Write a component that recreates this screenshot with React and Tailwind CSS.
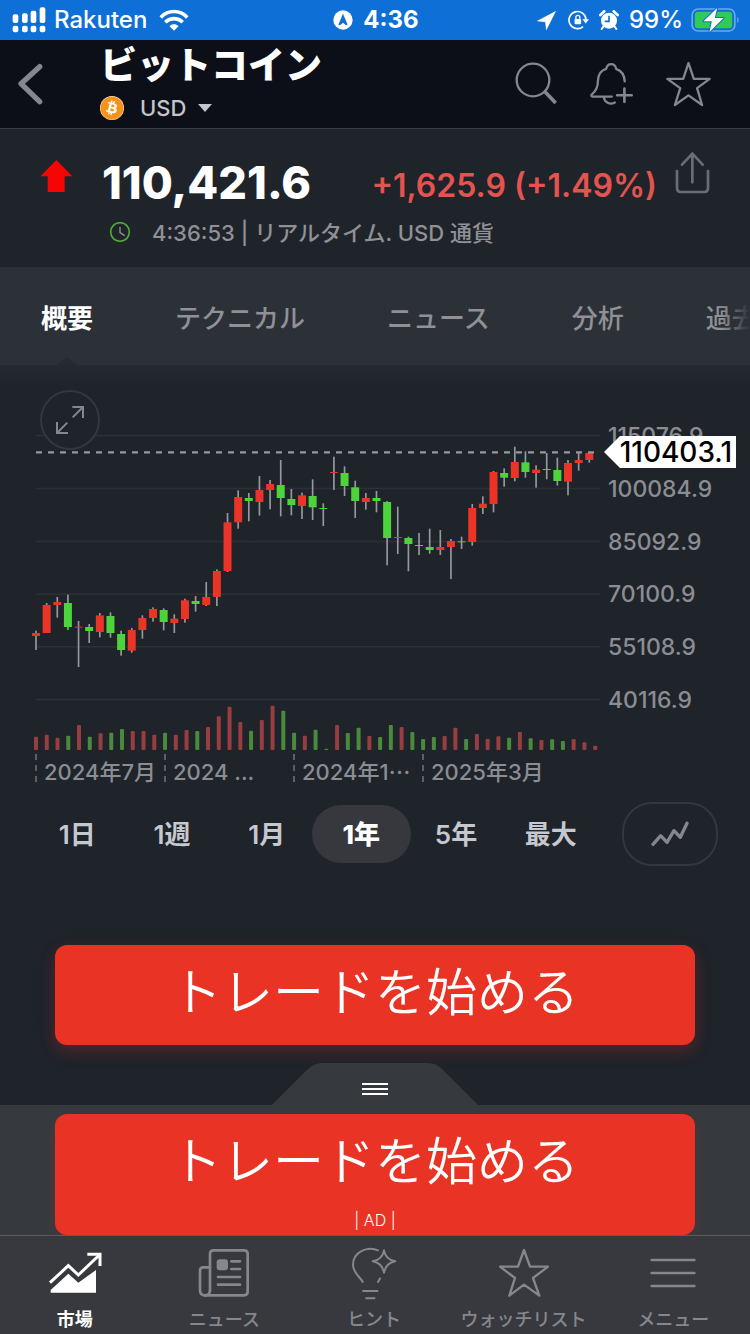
import React, { useState } from 'react'
import { FaBitcoin } from 'react-icons/fa'

// [wick top, wick bottom, body top, body bottom, direction]
const CANDLES = [
  [752, 810, 759, 768, 'up'],
  [669, 759, 675, 759, 'up'],
  [651, 713, 666, 675, 'up'],
  [644, 750, 669, 741, 'down'],
  [723, 861, 740, 743, 'up'],
  [732, 789, 741, 753, 'down'],
  [699, 772, 706, 756, 'up'],
  [697, 773, 708, 759, 'down'],
  [752, 827, 762, 810, 'down'],
  [744, 818, 750, 812, 'up'],
  [706, 776, 714, 750, 'up'],
  [682, 725, 687, 714, 'up'],
  [685, 751, 690, 726, 'down'],
  [703, 759, 716, 729, 'up'],
  [656, 728, 661, 717, 'up'],
  [648, 695, 663, 672, 'down'],
  [606, 678, 651, 675, 'up'],
  [568, 678, 573, 651, 'up'],
  [399, 576, 427, 573, 'up'],
  [331, 446, 351, 427, 'up'],
  [339, 424, 354, 363, 'down'],
  [288, 407, 330, 366, 'up'],
  [300, 388, 312, 330, 'up'],
  [240, 409, 315, 354, 'down'],
  [327, 406, 357, 375, 'down'],
  [338, 417, 346, 378, 'up'],
  [298, 420, 348, 382, 'down'],
  [370, 438, 384, 387, 'down'],
  [230, 330, 276, 279, 'up'],
  [259, 348, 279, 318, 'down'],
  [302, 414, 322, 363, 'down'],
  [339, 389, 354, 366, 'up'],
  [333, 397, 354, 363, 'down'],
  [363, 556, 366, 474, 'down'],
  [380, 522, 471, 474, 'up'],
  [470, 574, 474, 492, 'down'],
  [459, 525, 495, 498, 'down'],
  [446, 521, 501, 510, 'down'],
  [450, 525, 501, 510, 'up'],
  [477, 597, 483, 501, 'up'],
  [470, 507, 484, 487, 'down'],
  [372, 497, 384, 486, 'up'],
  [349, 402, 371, 384, 'up'],
  [273, 397, 276, 372, 'up'],
  [265, 320, 279, 293, 'down'],
  [200, 304, 246, 294, 'up'],
  [214, 293, 247, 276, 'down'],
  [256, 323, 269, 279, 'up'],
  [219, 298, 267, 270, 'down'],
  [233, 317, 270, 303, 'down'],
  [240, 346, 249, 305, 'up'],
  [219, 272, 240, 249, 'up'],
  [217, 248, 219, 240, 'up'],
]

const VOLUMES = [
  [40, 'up'], [46, 'up'], [37, 'up'], [43, 'down'], [75, 'up'], [40, 'down'],
  [50, 'up'], [52, 'down'], [63, 'down'], [57, 'up'], [57, 'up'], [46, 'up'],
  [52, 'down'], [46, 'up'], [60, 'up'], [57, 'down'], [69, 'up'], [101, 'up'],
  [130, 'up'], [84, 'up'], [58, 'down'], [90, 'up'], [133, 'up'], [118, 'down'],
  [52, 'down'], [43, 'up'], [61, 'down'], [4, 'down'], [75, 'up'], [51, 'down'],
  [67, 'down'], [42, 'up'], [39, 'down'], [75, 'down'], [69, 'up'], [54, 'down'],
  [33, 'down'], [39, 'down'], [42, 'up'], [67, 'up'], [33, 'down'], [48, 'up'],
  [34, 'up'], [41, 'up'], [37, 'down'], [54, 'up'], [35, 'down'], [30, 'up'],
  [32, 'down'], [27, 'down'], [33, 'up'], [23, 'up'], [13, 'up'],
]

const GRID = [167, 326, 485, 643, 801, 959]
const PRICES = ['115076.9', '100084.9', '85092.9', '70100.9', '55108.9', '40116.9']
const DATES = ['2024年7月', '2024 ...', '2024年1⋯', '2025年3月']
const TABS = ['概要', 'テクニカル', 'ニュース', '分析', '過去データ']
const PERIODS = ['1日', '1週', '1月', '1年', '5年', '最大']

function StatusBar() {
  return (
    <div className="h-10 bg-[#0e6fd6] text-white grid grid-cols-[1fr_auto_1fr] items-center pl-3 pr-[10px] text-2xl leading-none">
      <div className="flex items-center font-medium">
        <svg viewBox="0 0 102 78" className="w-[34px] h-[26px]" fill="currentColor">
          <rect x="2" y="22" width="17" height="26" rx="6" />
          <rect x="30" y="19" width="17" height="29" rx="6" />
          <rect x="56" y="11" width="17" height="37" rx="6" />
          <rect x="83" y="1" width="17" height="47" rx="6" />
          <rect x="2" y="56" width="17" height="20" rx="6" />
          <rect x="30" y="56" width="17" height="20" rx="6" />
          <rect x="56" y="56" width="17" height="20" rx="6" />
          <rect x="83" y="56" width="17" height="20" rx="6" />
        </svg>
        <span className="ml-2">Rakuten</span>
        <svg viewBox="0 0 90 68" className="ml-3 w-[30px] h-[22px]" fill="none" stroke="currentColor" strokeWidth="11">
          <path d="M4 26C27 2 63 2 86 26" />
          <path d="M18 41C34 26 56 26 72 41" />
          <path d="M31 53C39 45 51 45 59 53L45 67Z" fill="currentColor" stroke="none" />
        </svg>
      </div>
      <div className="flex items-center gap-[10px] font-bold">
        <svg viewBox="0 0 60 60" className="w-5 h-5">
          <circle cx="30" cy="30" r="29" fill="#fff" />
          <path d="M30 11L44 44L39 46L30 38L21 46L16 44Z" fill="#0e6fd6" />
        </svg>
        <span>4:36</span>
      </div>
      <div className="flex items-center justify-end">
        <svg viewBox="0 0 57 57" className="w-[19px] h-[19px]" fill="currentColor">
          <path d="M56 1L28 57L25 33L1 30Z" stroke="currentColor" strokeWidth="1" strokeLinejoin="round" />
        </svg>
        <svg viewBox="0 0 64 60" className="ml-3 w-[21px] h-5" fill="none" stroke="currentColor" strokeWidth="5">
          <path d="M46 50A26 26 0 1 1 55 29" />
          <path d="M44 28H64L54 41Z" fill="currentColor" stroke="none" />
          <rect x="20" y="27" width="20" height="16" rx="3" fill="currentColor" stroke="none" />
          <path d="M24 28V22A6 6 0 0 1 36 22V28" strokeWidth="4" />
        </svg>
        <svg viewBox="0 0 60 60" className="ml-[10px] w-5 h-5" fill="currentColor">
          <circle cx="30" cy="32" r="24" />
          <path d="M4 15L16 4M56 15L44 4" stroke="currentColor" strokeWidth="8" strokeLinecap="round" />
          <path d="M13 50L8 57M47 50L52 57" stroke="currentColor" strokeWidth="6" strokeLinecap="round" />
          <path d="M30 17V34H17" fill="none" stroke="#0e6fd6" strokeWidth="5" />
        </svg>
        <span className="ml-[10px] font-medium">99%</span>
        <svg viewBox="0 0 146 78" className="ml-2 w-[49px] h-[26px]">
          <rect x="3" y="6" width="128" height="66" rx="18" fill="none" stroke="#6ba8ea" strokeWidth="5" />
          <rect x="11" y="14" width="112" height="50" rx="10" fill="#32c955" />
          <path d="M138 30C144 33 144 45 138 48Z" fill="#6ba8ea" />
          <path d="M78 3L37 43H62L55 75L97 33H71Z" fill="#fff" stroke="#0e6fd6" strokeWidth="6" paintOrder="stroke" strokeLinejoin="round" />
        </svg>
      </div>
    </div>
  )
}

function Header() {
  return (
    <header className="h-[89px] bg-[#0c0f17] border-b border-[#3a3d42] flex items-center pl-4 pr-[39px] text-[#85878d]">
      <button aria-label="戻る" className="w-[30px]">
        <svg viewBox="0 0 90 126" className="w-[30px] h-[42px]" fill="none" stroke="currentColor" strokeWidth="16" strokeLinecap="round" strokeLinejoin="round">
          <path d="M71 11L15 62L71 116" />
        </svg>
      </button>
      <div className="ml-[54px] flex-1 self-stretch flex flex-col">
        <h1 className="text-[37px] leading-[52px] font-black text-white whitespace-nowrap">ビットコイン</h1>
        <button className="flex items-center h-8 text-[#c3c5ca]">
          <span className="w-6 h-6 rounded-full bg-white flex items-center justify-center">
            <FaBitcoin className="w-6 h-6 text-[#f7931a]" />
          </span>
          <span className="ml-4 text-[22px] font-medium">USD</span>
          <svg viewBox="0 0 14 8" className="ml-3 w-[14px] h-2" fill="currentColor">
            <path d="M0 0H14L7 8Z" />
          </svg>
        </button>
      </div>
      <div className="flex items-center gap-[33px]">
        <button aria-label="検索">
          <svg viewBox="0 0 126 132" className="w-[42px] h-11" fill="none" stroke="currentColor">
            <circle cx="54" cy="54" r="49" strokeWidth="7" />
            <path d="M90 89L122 123" strokeWidth="11" />
          </svg>
        </button>
        <button aria-label="アラート">
          <svg viewBox="0 0 130 132" className="w-[43px] h-11" fill="none" stroke="currentColor" strokeWidth="7" strokeLinecap="round" strokeLinejoin="round">
            <path d="M66 104H7C3 104 3 99 7 96C19 86 24 74 24 56C25 36 34 24 49 20C51 10 57 6 64 6C71 6 77 10 79 20C94 25 104 37 105 58" />
            <path d="M42 106C43 121 60 130 75 122" />
            <path d="M104 80V120M82 100H126" strokeWidth="8" />
          </svg>
        </button>
        <button aria-label="お気に入り">
          <svg viewBox="0 0 136 142" className="w-[45px] h-[47px]" fill="none" stroke="currentColor" strokeWidth="7" strokeLinejoin="round">
            <path d="M68 6L84 54H132L94 82L109 133L68 104L27 133L43 82L4 54H52Z" />
          </svg>
        </button>
      </div>
    </header>
  )
}

function Quote() {
  return (
    <section className="h-[138px] pl-[41px] pr-10 pt-[22px]">
      <div className="flex items-start">
        <svg viewBox="0 0 96 99" className="mt-[9px] w-8 h-[33px]" fill="#f60505">
          <path d="M46 0L94 49H71V96H20V49H-2Z" />
        </svg>
        <div className="ml-[29px] h-[62px] flex-1 flex items-center justify-between whitespace-nowrap">
          <span className="text-[45px] leading-none font-extrabold text-white">110,421.6</span>
          <span className="pt-2 text-[32px] leading-none font-semibold text-[#e4544e]">+1,625.9 (+1.49%)</span>
        </div>
        <button aria-label="共有" className="ml-[18px] text-[#696d74]">
          <svg viewBox="0 0 105 132" className="w-[35px] h-11" fill="none" stroke="currentColor" strokeWidth="8" strokeLinecap="round" strokeLinejoin="round">
            <path d="M52 94V8M21 41L52 8L83 41" />
            <path d="M6 60V112Q6 123 17 123H88Q99 123 99 112V60" />
          </svg>
        </button>
      </div>
      <div className="ml-[68px] mt-[6px] flex items-center text-[#8f9196]">
        <svg viewBox="0 0 66 66" className="w-[22px] h-[22px]" fill="none" strokeWidth="5">
          <circle cx="33" cy="30" r="28" stroke="#54a838" />
          <path d="M33 15V32L47 41" stroke="currentColor" strokeWidth="4" />
        </svg>
        <span className="ml-[21px] text-[22px] leading-7 font-medium whitespace-nowrap">4:36:53 | リアルタイム. USD 通貨</span>
      </div>
    </section>
  )
}

function Tabs({ active, onSelect }) {
  return (
    <nav className="relative h-[98px] bg-[#2c3037] overflow-hidden">
      <div className="h-full flex items-stretch gap-[82px] pl-[41px] text-[26px] font-medium whitespace-nowrap">
        {TABS.map((tab) => (
          <button
            key={tab}
            onClick={() => onSelect(tab)}
            className={
              'relative shrink-0 pt-1 ' + (tab === active ? 'text-white font-bold' : 'text-[#8f9196]')
            }
          >
            {tab}
            {tab === active && (
              <svg viewBox="0 0 20 8" className="absolute bottom-0 left-1/2 -translate-x-1/2 w-5 h-2" fill="#262a31">
                <path d="M0 8L10 0L20 8Z" />
              </svg>
            )}
          </button>
        ))}
      </div>
      <div className="absolute inset-y-0 right-0 w-7 bg-linear-to-r from-transparent to-[#2c3037]" />
    </nav>
  )
}

function CandleChart() {
  return (
    <svg viewBox="0 0 1812 1122" className="block w-full h-auto">
      {GRID.map((y) => (
        <rect key={y} x="108" y={y - 3} width="1692" height="5" fill="#2b2f36" />
      ))}
      {CANDLES.map(([wickTop, wickBottom, top, bottom, dir], i) => {
        const x = 108 + i * 31.92
        return (
          <g key={i}>
            <rect x={x - 2.5} y={wickTop} width="5" height={wickBottom - wickTop} fill="#96989c" />
            <rect x={x - 12} y={top} width="24" height={bottom - top} fill={dir === 'up' ? '#e93427' : '#4dd33c'} />
          </g>
        )
      })}
      <path d="M108 217H1784" stroke="#96989c" strokeWidth="7" strokeDasharray="18 18" />
      {VOLUMES.map(([height, dir], i) => (
        <rect
          key={i}
          x={102 + i * 32.26}
          y={1110 - height}
          width="12"
          height={height}
          rx="3"
          fill={dir === 'up' ? '#983e40' : '#4b8a3c'}
        />
      ))}
    </svg>
  )
}

function ChartPanel() {
  return (
    <section className="relative pt-[15px]">
      <div className="flex">
        <div className="flex-1">
          <CandleChart />
        </div>
        <div className="w-[146px] pl-1 pt-11 pb-[42px] flex flex-col justify-between text-[23px] leading-6 font-medium text-[#8b8d92]">
          {PRICES.map((price) => (
            <span key={price}>{price}</span>
          ))}
        </div>
      </div>
      <div className="ml-[35px] flex text-[22px] leading-7 font-medium text-[#8b8d92]">
        {DATES.map((date) => (
          <span key={date} className="w-[129px] h-7 pt-1 pl-[7px] border-l-2 border-dashed border-[#5c5f65] whitespace-nowrap">
            {date}
          </span>
        ))}
      </div>

      <button
        aria-label="全画面"
        className="absolute left-10 top-[25px] w-[60px] h-[60px] rounded-full border-2 border-[#33373e] bg-[#1f232a] text-[#85878d] flex items-center justify-center"
      >
        <svg viewBox="0 0 84 84" className="w-7 h-7" fill="none" stroke="currentColor" strokeWidth="6">
          <path d="M49 3H81V36M81 3L50 34" />
          <path d="M3 48V81H36M3 81L34 50" />
        </svg>
      </button>
      <div className="absolute right-[14px] top-[71px] flex">
        <svg viewBox="0 0 16 32" className="w-4 h-8" fill="#fff">
          <path d="M16 0V32L0 16Z" />
        </svg>
        <span className="h-8 pr-1 bg-white text-black text-[28px] leading-8 font-medium">110403.1</span>
      </div>
    </section>
  )
}

function PeriodBar({ active, onSelect }) {
  return (
    <div className="mt-5 pl-[30px] pr-8 flex items-center">
      <div className="flex-1 grid grid-cols-6 text-[26px] font-semibold text-[#c6c8cf]">
        {PERIODS.map((period) => (
          <button
            key={period}
            onClick={() => onSelect(period)}
            className={
              'h-[58px] rounded-full -mx-[2px] ' +
              (period === active ? 'bg-[#37383d] text-white font-extrabold' : '')
            }
          >
            {period}
          </button>
        ))}
      </div>
      <button
        aria-label="チャートの種類"
        className="ml-6 w-24 h-16 rounded-[30px] border-2 border-[#33373e] text-[#85878d] flex items-center justify-center"
      >
        <svg viewBox="0 0 114 78" className="w-[38px] h-[26px]" fill="none" stroke="currentColor" strokeWidth="10" strokeLinecap="round" strokeLinejoin="round">
          <path d="M6 70L29 44L48 64L69 29L88 49L108 7" />
        </svg>
      </button>
    </div>
  )
}

function TradeButton({ children, className }) {
  return (
    <button
      className={
        'block mx-[55px] rounded-xl bg-[#e93324] text-white text-[51px] leading-[96px] font-[350] whitespace-nowrap ' +
        className
      }
    >
      トレードを始める
      {children}
    </button>
  )
}

function MarketIcon() {
  return (
    <svg viewBox="0 0 162 126" className="w-[54px] h-[42px]" fill="none" stroke="currentColor" strokeWidth="9">
      <path d="M6 92L61 41L91 69L154 9" />
      <path d="M118 7H156V42" />
      <path d="M8 114L61 65L91 92L144 54V122H8Z" fill="currentColor" stroke="none" />
    </svg>
  )
}

function NewsIcon() {
  return (
    <svg viewBox="0 0 156 150" className="w-[52px] h-[50px]" fill="none" stroke="currentColor" strokeWidth="8" strokeLinecap="round">
      <path d="M36 128V18Q36 7 47 7H138Q149 7 149 18V130Q149 142 138 142H20" />
      <path d="M36 58H16Q6 58 6 68V127Q6 142 21 142T36 127" />
      <rect x="56" y="34" width="34" height="33" rx="9" fill="currentColor" stroke="none" />
      <path d="M100 40H126M100 63H126M60 87H126M60 110H126" />
    </svg>
  )
}

function HintIcon() {
  return (
    <svg viewBox="0 0 144 162" className="w-12 h-[54px]" fill="none" stroke="currentColor" strokeWidth="6">
      <path d="M39 110C34 94 9 84 9 56C9 20 50-2 86 14" />
      <path d="M91 95L83 110M37 135H85M46 157H76" />
      <path d="M102 13Q107 41 136 46Q107 51 102 80Q97 51 68 46Q97 41 102 13Z" strokeLinejoin="round" />
    </svg>
  )
}

function StarIcon() {
  return (
    <svg viewBox="0 0 150 150" className="w-[50px] h-[50px]" fill="none" stroke="currentColor" strokeWidth="7" strokeLinejoin="round">
      <path d="M75 6L93 56H147L102 90L121 143L75 110L31 143L48 90L3 56H57Z" />
    </svg>
  )
}

function MenuIcon() {
  return (
    <svg viewBox="0 0 138 90" className="w-[46px] h-[30px]" fill="none" stroke="currentColor" strokeWidth="8" strokeLinecap="round">
      <path d="M5 6H133M5 45H133M5 84H133" />
    </svg>
  )
}

const NAV = [
  { label: '市場', Icon: MarketIcon },
  { label: 'ニュース', Icon: NewsIcon },
  { label: 'ヒント', Icon: HintIcon },
  { label: 'ウォッチリスト', Icon: StarIcon },
  { label: 'メニュー', Icon: MenuIcon },
]

function BottomNav() {
  return (
    <nav className="h-[99px] pr-[2px] bg-[#37393e] border-t border-[#5a5c61] grid grid-cols-5">
      {NAV.map(({ label, Icon }, i) => (
        <a
          key={label}
          href="#"
          className={
            'flex flex-col items-center text-[18px] leading-6 whitespace-nowrap ' +
            (i === 0 ? 'text-white font-bold' : 'text-[#85878c] font-medium')
          }
        >
          <span className="h-[72px] pt-[2px] flex items-center">
            <Icon />
          </span>
          {label}
        </a>
      ))}
    </nav>
  )
}

export default function App() {
  const [tab, setTab] = useState('概要')
  const [period, setPeriod] = useState('1年')

  return (
    <div
      lang="ja"
      className="min-h-screen bg-[#1f232a] flex flex-col overflow-x-hidden font-['Inter','Noto_Sans_CJK_JP',sans-serif]"
    >
      <StatusBar />
      <Header />
      <Quote />
      <Tabs active={tab} onSelect={setTab} />
      <main className="flex-1 flex flex-col bg-linear-to-b from-[#252931] to-[#1f232a] to-3%">
        <ChartPanel />
        <PeriodBar active={period} onSelect={setPeriod} />
        <TradeButton className="mt-[79px] pb-1 shadow-[0_6px_16px_rgba(233,51,36,0.25)]" />
      </main>
      <button aria-label="広告を閉じる" className="mx-auto mt-[18px] block">
        <svg viewBox="0 0 206 42" className="block w-[206px] h-[42px]">
          <path d="M0 42L36 6Q42 0 50 0H156Q164 0 170 6L206 42Z" fill="#363a3e" />
          <path d="M90 21H116M90 26H116M90 31H116" stroke="#fff" strokeWidth="2" />
        </svg>
      </button>
      <aside className="bg-[#363a3e] pt-[9px] flex flex-col">
        <TradeButton className="pb-[5px] shadow-[0_6px_16px_rgba(233,51,36,0.12)]">
          <span className="block text-base leading-5 font-light">| AD |</span>
        </TradeButton>
      </aside>
      <BottomNav />
    </div>
  )
}
